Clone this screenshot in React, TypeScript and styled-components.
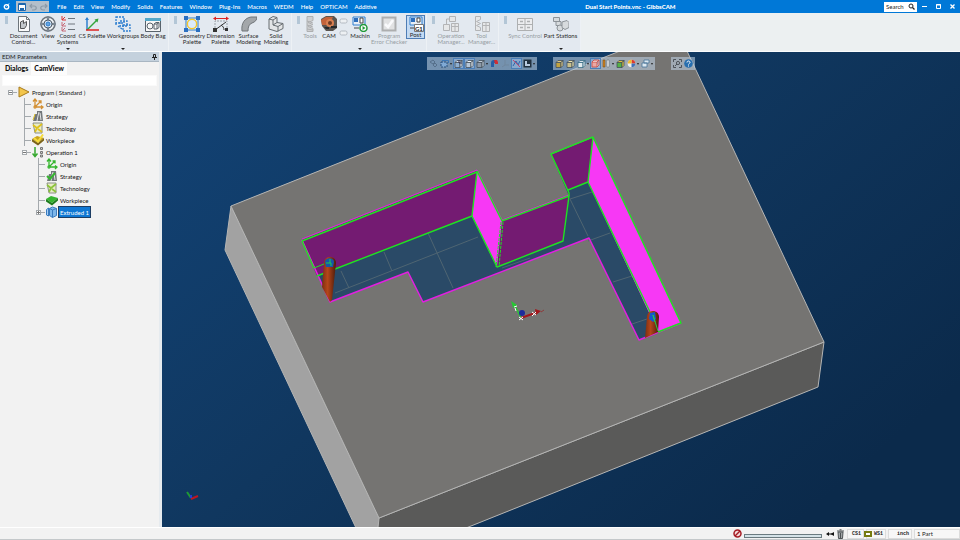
import React from "react";
import styled, { createGlobalStyle, css } from "styled-components";

const GlobalStyle = createGlobalStyle`
  *, *::before, *::after { box-sizing: border-box; }
  body { margin: 0; background: #f0f0f0; }
  button, input { font: inherit; color: inherit; margin: 0; padding: 0; border: 0; background: none; }
  button { cursor: pointer; }
  ul { list-style: none; margin: 0; padding: 0; }
  svg { display: block; flex: none; }
`;

const Shell = styled.div`
  display: flex;
  flex-direction: column;
  min-height: 100vh;
  font-family: Lato, "Open Sans", sans-serif;
  font-size: 6px;
  line-height: 7px;
  color: #1c1c1c;
  overflow: hidden;
`;

/* ---------- title bar ---------- */
const TitleBar = styled.header`
  display: flex;
  align-items: center;
  height: 13px;
  background: #0078d7;
  color: #fff;
`;
const AppMark = styled.span`
  display: flex;
  justify-content: center;
  width: 16px;
  padding-right: 3px;
`;
const QuickAccess = styled.div`
  display: flex;
  align-items: center;
  justify-content: space-around;
  width: 33px;
  height: 11px;
  background: #b3bfca;
`;
const Menu = styled.nav`
  display: flex;
  gap: 7px;
  padding-left: 8px;
`;
const MenuItem = styled.button`
  white-space: nowrap;
  font-weight: 500;
`;
const Title = styled.h1`
  flex: 1;
  margin: 0;
  text-align: center;
  font-size: 6px;
  line-height: 7px;
  font-weight: 900;
  white-space: nowrap;
`;
const SearchBox = styled.label`
  display: flex;
  align-items: center;
  width: 33px;
  height: 10px;
  padding: 0 2px;
  background: #fff;
  color: #222;
`;
const SearchInput = styled.input`
  flex: 1;
  width: 20px;
  min-width: 0;
  outline: 0;
  &::placeholder { color: #222; opacity: 1; }
`;
const WindowButtons = styled.div`
  display: flex;
  justify-content: space-around;
  width: 43px;
`;

/* ---------- ribbon ---------- */
const Ribbon = styled.div`
  display: flex;
  height: 39px;
  background: #ecf0f1;
  border-bottom: 1px solid #fafcfd;
`;
const Group = styled.div`
  display: flex;
  padding: 2px 1px 0 5px;
  background: #e3e9f0;
  border-right: 1px solid #edf1f5;
`;
const Grip = styled.span`
  width: 3px;
  height: 8px;
  margin: 1px 1px 0 0;
  background: #b3c6d6;
`;
const ToolButton = styled.button<{ $w: number; $off?: boolean; $on?: boolean }>`
  display: flex;
  flex-direction: column;
  align-items: center;
  width: ${(p) => p.$w}px;
  height: 35px;
  padding-top: 1px;
  white-space: nowrap;
  color: ${(p) => (p.$off ? "#979da3" : "#2b2b2b")};
  ${(p) => p.$off && css`svg { filter: grayscale(1); opacity: 0.8; }`}
  ${(p) =>
    p.$on &&
    css`
      height: 24px;
      padding-top: 0;
      background: #c3daf3;
      border: 1px solid #4e7db5;
    `}
`;
const ToolLabel = styled.span`
  display: flex;
  flex-direction: column;
  align-items: center;
  margin-top: 1px;
  line-height: 6px;
`;
const PressedLabel = styled(ToolLabel)`
  margin-top: 0;
`;
const Drop = styled.span`
  margin: auto 0 0;
  border: 2px solid transparent;
  border-top-color: #222;
  border-bottom: 0;
`;
const Minis = styled.div`
  display: flex;
  flex-direction: column;
  gap: 6px;
  width: 9px;
  padding-top: 3px;
`;

/* ---------- workspace ---------- */
const Work = styled.main`
  display: flex;
  flex: 1;
`;
const Side = styled.aside`
  display: flex;
  flex-direction: column;
  width: 162px;
  flex: none;
  border-right: 3px solid #e6ebef;
  background: #f2f2f2;
`;
const SideHead = styled.div`
  display: flex;
  align-items: center;
  justify-content: space-between;
  height: 10px;
  padding: 0 2px;
  background: #c4d1dd;
  border-bottom: 1px solid #a9b6c2;
`;
const Tabs = styled.div`
  display: flex;
  height: 13px;
  padding-left: 2px;
`;
const Tab = styled.button<{ $on?: boolean }>`
  padding: 1px 3px;
  font-size: 7px;
  line-height: 11px;
  font-weight: 900;
  color: #111;
  background: ${(p) => (p.$on ? "#fcfcfc" : "transparent")};
`;
const Filter = styled.input`
  height: 11px;
  margin: 0 2px;
  background: #fff;
  border: 1px solid #fafafa;
  outline: 0;
`;
const Tree = styled.ul`
  flex: 1;
  padding: 0 0 0 4px;
`;
const Row = styled.li`
  display: flex;
  align-items: center;
  height: 12px;
`;
const RowLabel = styled.button<{ $on?: boolean }>`
  height: 10px;
  padding: 0 1px;
  margin-left: 1px;
  white-space: nowrap;
  color: ${(p) => (p.$on ? "#fff" : "#111")};
  background: ${(p) => (p.$on ? "#0f78d4" : "transparent")};
  outline: ${(p) => (p.$on ? "1px solid #1c3d63" : "none")};
`;
const View = styled.section`
  position: relative;
  flex: 1;
  min-width: 0;
  background: #103a68;
  overflow: hidden;
`;
const Scene = styled.svg`
  width: 100%;
  height: 100%;
  max-height: calc(100vh - 65px);
`;
const Floating = styled.div`
  position: absolute;
  top: 5px;
  left: 0;
  right: 0;
  display: flex;
  justify-content: center;
  gap: 16px;
`;
const Bar = styled.div`
  display: flex;
  align-items: center;
  height: 13px;
  padding: 0 1px;
  background: rgba(190, 208, 226, 0.58);
`;
const BarButton = styled.button<{ $on?: boolean }>`
  display: flex;
  justify-content: center;
  align-items: center;
  width: 11px;
  height: 11px;
  background: ${(p) => (p.$on ? "rgba(150,185,225,.6)" : "transparent")};
  border: ${(p) => (p.$on ? "1px solid #4c7fb8" : "0")};
`;
const BarDrop = styled.span`
  margin-right: 1px;
  border: 1px solid transparent;
  border-top: 2px solid #222;
  border-bottom: 0;
`;

/* ---------- status bar ---------- */
const Status = styled.footer`
  display: flex;
  align-items: center;
  justify-content: flex-end;
  gap: 2px;
  height: 13px;
  background: #f2f2f2;
  border-top: 1px solid #fff;
  border-bottom: 1px solid #c4c8ca;
`;
const Track = styled.div`
  width: 78px;
  height: 4px;
  margin: 4px 2px 0 0;
  background: #d5e3e8;
  border: 1px solid #6b7b80;
`;
const Cell = styled.span<{ $w: number; $mono?: boolean }>`
  display: flex;
  align-items: center;
  justify-content: ${(p) => (p.$mono ? "flex-end" : "flex-start")};
  gap: 2px;
  width: ${(p) => p.$w}px;
  height: 10px;
  padding: 0 2px;
  border: 1px solid #dcdcdc;
  background: #f7f7f7;
  ${(p) => p.$mono && css`font: 700 5px/6px "Liberation Mono", monospace;`}
`;

/* ---------- ribbon icons, 16 x 16 ---------- */
const B = "#2f7fcf";
const G = "#6e757c";
const art: Record<string, React.ReactNode> = {
  doc: (
    <g fill="none" stroke={G}>
      <path d="M2.500 .5h8l3 3v12h-11z" fill="#fafafa" />
      <path d="M10.500.5v3h3" />
      <path d="M4.500 6l3-1.500v3l3-2v4l-2 3h-4z" fill="#c3c7ca" stroke="#555" />
    </g>
  ),
  view: (
    <g fill="none" stroke={G}>
      <circle cx="8" cy="8" r="7" strokeWidth="1.500" fill="#eef1f4" />
      <path d="M8 0v16M0 8h16" strokeWidth="2.500" stroke="#7d8893" />
      <circle cx="8" cy="8" r="4" fill="#dce9f6" stroke="#4f5d6b" />
      <circle cx="8" cy="8" r="2" fill="#69a6de" stroke={B} />
    </g>
  ),
  coord: (
    <g fill="none">
      {[0, 6, 11].map((y) => (
        <path key={y} d={`M2 ${y}v4h4M2 ${y + 4}l3-3`} stroke={y === 0 ? "#d33" : "#c66a78"} />
      ))}
      <path d="M8 2.500h7M8 8h7M8 13.500h7" stroke={G} />
    </g>
  ),
  cs: (
    <g fill="none" strokeWidth="1.500">
      <path d="M3 14V2" stroke={B} />
      <path d="M1 4l2-3 2 3z" fill={B} stroke="none" />
      <path d="M3 14L13 4" stroke="#34a53c" />
      <path d="M14.500 2.500l-4 1 3 3z" fill="#34a53c" stroke="none" />
      <path d="M2 14h13" stroke="#d22" />
    </g>
  ),
  work: (
    <g fill="none" stroke={B} strokeWidth="1.300" strokeDasharray="2 1">
      <path d="M1 1h8v6h-8zM5 5h7v5h-7zM8 9h7v6h-7z" />
      <path d="M1 7v2M3 10l4 3" />
    </g>
  ),
  bag: (
    <g fill="none" stroke="#59636c">
      <path d="M.5 2.500h15v13h-15z" fill="#f7f7f7" />
      <path d="M0 2h16v3H0z" fill="#53a7c8" stroke="none" />
      <circle cx="5" cy="10" r="3" />
      <path d="M9 8l2-1.500h3v5l-2 1.500h-3zM9 8h3v5M12 8l2-1.500" />
    </g>
  ),
  geo: (
    <g fill="none">
      <path d="M2 2h12v12H2z" fill="#dcebfa" stroke={B} />
      <circle cx="8" cy="8" r="4.700" stroke="#f4c62c" strokeWidth="1.500" />
      <path d="M0 0h4v4H0zM12 0h4v4h-4zM0 12h4v4H0zM12 12h4v4h-4z" fill="#2a6fc0" />
    </g>
  ),
  dim: (
    <g fill="none">
      <path d="M1 2.500h14" stroke="#d22" />
      <path d="M0 2.500l3-2v4zM16 2.500l-3-2v4z" fill="#d22" />
      <path d="M2 15V5h12v10" stroke="#9aa2a9" strokeDasharray="2 1" />
      <path d="M2 14L13 6M8 9c2 1 3 3 3 5" stroke="#333" />
      <path d="M0 12h4v4H0zM12 12h3v3h-3z" fill="#333" />
    </g>
  ),
  surf: (
    <path d="M1 15c-1-8 3-13 9-14h6c0 3-2 5-5 6-3 1-4 4-4 8z" fill="#a3a7aa" stroke="#707579" />
  ),
  solid: (
    <g fill="#e3e5e6" stroke="#666c71">
      <path d="M1 3l4-2.500 4 1v5l6 1v5l-6 3-8-2.500z" />
      <path d="M1 3l4 1v5l5 1.500v5M5 4l4-2.500M10 10.500l5-3M5 9l4-2.500" fill="none" />
    </g>
  ),
  tools: (
    <g fill="#c8ccd0" stroke="#9ca2a8">
      <path d="M5 .5h6v4l-5 2 5 2-5 2 5 2v3H5z" />
      <path d="M5 5l6 2M5 9l6 2M5 13l6 1" />
    </g>
  ),
  cam: (
    <g>
      <path d="M0 3l5-3h8l3 3v9l-4 3H5l-4-5z" fill="#59544f" />
      <path d="M0 4l5-3h7l-2 4-3 4H1z" fill="#c4633a" />
      <circle cx="9" cy="7" r="4" fill="#d98052" />
      <circle cx="9" cy="7" r="2" fill="#6b3a25" />
      <path d="M10 10h6v2h-6zM3 11h5v2H5z" fill="#26292c" />
    </g>
  ),
  machin: (
    <g>
      <path d="M1 1h12v8H1z" fill="#e8eef5" stroke={B} />
      <path d="M2 2h4v4H2z" fill="#2c6dbb" />
      <path d="M8 2h3v5H8z" fill="#fff" stroke="#444" />
      <path d="M2 12h5" stroke="#444" />
      <circle cx="11.500" cy="12" r="3.500" fill="#fff" stroke="#229a3a" strokeWidth="1.500" />
      <path d="M10.500 10l3 2-3 2z" fill="#229a3a" />
    </g>
  ),
  check: (
    <g fill="none">
      <path d="M1.500 1.500h13v13h-13z" fill="#dfe1e3" stroke="#9ba1a6" strokeWidth="2" />
      <path d="M4 8l3 3 5-7" stroke="#fff" strokeWidth="2.500" />
    </g>
  ),
  post: (
    <g>
      <path d="M2 1h12v8H2z" fill="#e8eef5" stroke={B} />
      <path d="M3 2h4v4H3z" fill="#2c6dbb" />
      <path d="M9 2h3v4H9z" fill="#fff" stroke="#444" />
      <path d="M2 12h4" stroke="#444" />
      <path d="M6.500 8.500h9v7h-9z" fill="#fff" stroke="#777" />
      <text x="7" y="14.500" fontSize="6" fontWeight="700" fill="#222">G1</text>
    </g>
  ),
  opman: (
    <g fill="#e4e7ea" stroke="#a3a9ae">
      <path d="M6.500.5h6v5h-6zM.5 8.500h6v6h-6zM8.500 7.500h7v8h-7zM8.500 10.500h7M12 7.500v8M3.500 8V3h3" />
    </g>
  ),
  toolman: (
    <g fill="#e4e7ea" stroke="#a3a9ae">
      <path d="M1.500.5h5v3l-4 2 4 2-4 2 4 2v3h-5zM8.500 6.500h7v9h-7zM8.500 9.500h7M12 6.500v9" />
    </g>
  ),
  sync: (
    <g fill="none" stroke="#9da3a9">
      <path d="M.5 2.500h15v12H.5zM8 2v12M.5 8.500h15" fill="#eceff1" />
      <path d="M3 5.500h3M10 5.500h3M3 11.500h3M10 11.500h3" strokeWidth="1.500" />
    </g>
  ),
  stations: (
    <g fill="#d7dbde" stroke="#8d9398">
      <path d="M.5 1.500h6v4h-6zM3 5.500h5v4H3z" />
      <circle cx="7" cy="12" r="3" />
      <path d="M9 6l5-1.500 2 2v5l-4 2-3-2z" />
    </g>
  ),
};

const Icon = ({ name }: { name: string }) => (
  <svg width="16" height="16" viewBox="0 0 16 16" aria-hidden>
    {art[name]}
  </svg>
);

type Tool = { i: string; t: string[]; w: number; off?: boolean; on?: boolean; drop?: boolean };
const groups: Tool[][] = [
  [
    { i: "doc", t: ["Document", "Control..."], w: 29 },
    { i: "view", t: ["View"], w: 20 },
    { i: "coord", t: ["Coord", "Systems"], w: 19, drop: true },
    { i: "cs", t: ["CS Palette"], w: 30 },
    { i: "work", t: ["Workgroups"], w: 32, drop: true },
    { i: "bag", t: ["Body Bag"], w: 28 },
  ],
  [
    { i: "geo", t: ["Geometry", "Palette"], w: 28 },
    { i: "dim", t: ["Dimension", "Palette"], w: 29 },
    { i: "surf", t: ["Surface", "Modeling"], w: 27 },
    { i: "solid", t: ["Solid", "Modeling"], w: 28 },
  ],
  [
    { i: "tools", t: ["Tools"], w: 18, off: true },
    { i: "cam", t: ["CAM"], w: 20 },
    { i: "machin", t: ["Machin"], w: 24, drop: true },
    { i: "check", t: ["Program", "Error Checker"], w: 34, off: true },
    { i: "post", t: ["Post"], w: 19, on: true },
  ],
  [
    { i: "opman", t: ["Operation", "Manager..."], w: 30, off: true },
    { i: "toolman", t: ["Tool", "Manager..."], w: 31, off: true },
  ],
  [
    { i: "sync", t: ["Sync Control"], w: 34, off: true },
    { i: "stations", t: ["Part Stations"], w: 37, drop: true },
  ],
];

/* ---------- tree ---------- */
type Guide = "blank" | "tee" | "minus" | "plus";
const GuideMark = ({ kind }: { kind: Guide }) => (
  <svg width="14" height="12" viewBox="0 0 14 12" shapeRendering="crispEdges" aria-hidden>
    {kind !== "blank" && (
      <g fill="none" stroke="#a4a9ad">
        <path d="M6.500 6.500H13" />
        {kind === "tee" && <path d="M6.500 0v12" />}
        {kind === "plus" && <path d="M6.500 0v6" />}
        {kind !== "tee" && <path d="M4.500 4.500h4v4h-4z" fill="#fff" />}
        {kind !== "tee" && <path d="M5 6.500h3" stroke="#777" />}
        {kind === "plus" && <path d="M6.500 5v3" stroke="#777" />}
      </g>
    )}
  </svg>
);

const TreeIcon = ({ name, tone }: { name: string; tone: string }) => (
  <svg width="12" height="12" viewBox="0 0 12 12" aria-hidden>
    {name === "program" && <path d="M1 1l10 5-10 5z" fill="#f3c64c" stroke="#a97c1c" />}
    {name === "origin" && (
      <g fill="none" stroke={tone} strokeWidth="1.300">
        <path d="M3 9V2M1 3.500L3 1l2 2.500M3 9l6-6M6.500 3H9v2.500M3 9h7M9 7.500l2 1.500-2 2" />
        <circle cx="3" cy="9" r="1" fill="#fff" />
      </g>
    )}
    {name === "strategy" && (
      <g>
        <path d="M1 11l2-7h2V1h5l1 10z" fill="#72777a" />
        <path d="M5 11l1-5 1-4M8 3l1 7" stroke="#e6e6e6" fill="none" />
        {tone === "#35b52f" ? (
          <path d="M1 6l3 3 5-6" stroke={tone} strokeWidth="2" fill="none" />
        ) : (
          <path d="M1 10l2-6" stroke={tone} fill="none" />
        )}
      </g>
    )}
    {name === "technology" && (
      <g>
        <path d="M1 1h9v10H3z" fill="#e9ecc8" stroke="#8a8f86" />
        <path d="M1 3l4 3-2 4M5 6l5-4M6 7l4 3" stroke={tone} strokeWidth="1.700" fill="none" />
      </g>
    )}
    {name === "workpiece" && (
      <g>
        <path d="M0 5l5-3 7 2-6 5z" fill={tone} />
        <path d="M0 5l6 4 6-5v2.500l-6 5-6-4z" fill={tone === "#35b52f" ? "#1d7c1c" : "#7b6318"} />
        {tone !== "#35b52f" && <path d="M2 4l4 3.500 5-7" stroke="#f6dc3a" strokeWidth="2" fill="none" />}
      </g>
    )}
    {name === "operation" && (
      <g fill="none">
        <path d="M3 1v9M.5 7.500L3 10.500l2.500-3" stroke="#35a82f" strokeWidth="1.500" />
        <path d="M8.500 1.500h2v2h-2zM8.500 5.500h2v2h-2zM8.500 9h2v2h-2z" stroke="#777" fill="#ccc" />
      </g>
    )}
    {name === "extruded" && (
      <g stroke="#3a7cc0">
        <path d="M.5 3.500l2-1.500v8l-2-1z" fill="#a9cff3" />
        <path d="M3.500 2.500l3-1.500 4 1.500v7l-4 2-3-2z" fill="#7db6ea" />
        <path d="M6.500 4v7.500M3.500 2.500l3 1.500 4-1.500" fill="none" />
      </g>
    )}
  </svg>
);

const rows: { g: Guide[]; icon: string; tone?: string; label: string; on?: boolean }[] = [
  { g: ["minus"], icon: "program", label: "Program ( Standard )" },
  { g: ["blank", "tee"], icon: "origin", tone: "#d39034", label: "Origin" },
  { g: ["blank", "tee"], icon: "strategy", tone: "#e2c52e", label: "Strategy" },
  { g: ["blank", "tee"], icon: "technology", tone: "#dfc21c", label: "Technology" },
  { g: ["blank", "tee"], icon: "workpiece", tone: "#c9a41c", label: "Workpiece" },
  { g: ["blank", "minus"], icon: "operation", label: "Operation 1" },
  { g: ["blank", "blank", "tee"], icon: "origin", tone: "#35b52f", label: "Origin" },
  { g: ["blank", "blank", "tee"], icon: "strategy", tone: "#35b52f", label: "Strategy" },
  { g: ["blank", "blank", "tee"], icon: "technology", tone: "#8cc43a", label: "Technology" },
  { g: ["blank", "blank", "tee"], icon: "workpiece", tone: "#35b52f", label: "Workpiece" },
  { g: ["blank", "blank", "plus"], icon: "extruded", label: "Extruded 1", on: true },
];

/* ---------- floating view bars ---------- */
const Cube = ({ face, top = "#dfe6ee", line = "#45505a" }: { face: string; top?: string; line?: string }) => (
  <g stroke={line} strokeWidth=".8">
    <path d="M1 3.500h5v5H1z" fill={face} />
    <path d="M1 3.500l2-2h5l-2 2zM6 8.500l2-2v-5l-2 2z" fill={top} />
  </g>
);
const marks: Record<string, React.ReactNode> = {
  "Select faces": <path d="M1 3l3-2 2 2-2 2zM4 6l2-2 2 2-2 2z" fill="none" stroke="#56708b" />,
  "Select box": (
    <g><path d="M1 3h6v5H1z" fill="#7fa9d4" stroke="#274d78" strokeDasharray="2 1" /><path d="M2 1.500h6.500V4" fill="none" stroke="#3b77b7" /></g>
  ),
  "Show solids": <g><Cube face="#8fb0d2" /><path d="M5 1v3h3" stroke="#335" fill="none" /></g>,
  "Show stock": <Cube face="#b7c7d8" top="#edf2f7" />,
  "Show part": <Cube face="#8c9aa8" top="#c0ccd8" />,
  "Render mode": (
    <g><path d="M1 8V4c0-2 1-3 3-3h2v3H4v4z" fill="#255fa7" /><path d="M4 1h3l1 2v2H5z" fill="#cf2f35" /></g>
  ),
  "Show axes": <path d="M4 1v5h4M4 6L1 8" fill="none" stroke="#70879e" />,
  "Show path": (
    <g><path d="M1 7l3-5 2 4 2-4" fill="none" stroke="#2f62a6" /><path d="M1 1l7 7" stroke="#bd4672" /></g>
  ),
  "Background": (
    <g><path d="M.5.5h8v8h-8z" fill="#21303f" /><path d="M2 2h2v3h3v2H2z" fill="#b9cbe0" /></g>
  ),
  "Shaded": <Cube face="#c2a340" top="#dcc988" />,
  "Shaded edges": <Cube face="#c9c08d" top="#ebe3ae" />,
  "Wireframe": <Cube face="#e1ebef" top="#d4e0e8" line="#3b6e86" />,
  "Section": (
    <g stroke="#c9473f" strokeWidth=".8"><path d="M1 3h5v5H1z" fill="#eba9a4" /><path d="M1 3l2-2h5L6 3M6 8l2-2V1" fill="#e9c3c0" /></g>
  ),
  "Split": (
    <g><path d="M1 1h2v7H1z" fill="#d28623" stroke="#68420f" strokeWidth=".5" /><path d="M5 1h2v7H5z" fill="#eef1f3" stroke="#5a6167" strokeWidth=".5" /></g>
  ),
  "Stock colour": <Cube face="#54b148" top="#dfc040" />,
  "Palette": (
    <g><circle cx="4.500" cy="4.500" r="3.800" fill="#f1f1ee" /><path d="M4.500 4.500V.7a3.800 3.800 0 0 1 3.800 3.800z" fill="#db3c31" /><path d="M4.500 4.500h3.800a3.800 3.800 0 0 1-3.800 3.800z" fill="#4172b9" /><path d="M4.500 4.500H.7a3.800 3.800 0 0 1 3.800-3.800z" fill="#eebc33" /></g>
  ),
  "Windows": <path d="M3 1h5v3H3zM1 4h5v4H1z" fill="#dde8f1" stroke="#46749b" strokeWidth=".8" />,
  "Fit view": (
    <g fill="none" stroke="#454b50" strokeWidth=".9"><path d="M.5 3V.5H3M6 .5h2.500V3M.5 6v2.500H3M6 8.500h2.500V6M2 7l2-2" /><circle cx="5" cy="4" r="1.600" /></g>
  ),
  "Help": (
    <g><circle cx="4.500" cy="4.500" r="4.300" fill="#286faf" /><path d="M3 3.500c0-2 3-2 3 0 0 1-1.500 1-1.500 2M4.500 6.500v1" fill="none" stroke="#fff" /></g>
  ),
};
const bars: { n: string; on?: boolean; drop?: boolean }[][] = [
  [
    { n: "Select faces" }, { n: "Select box", drop: true }, { n: "Show solids", on: true },
    { n: "Show stock", on: true }, { n: "Show part", drop: true }, { n: "Render mode" },
    { n: "Show axes" }, { n: "Show path", on: true }, { n: "Background", drop: true },
  ],
  [
    { n: "Shaded" }, { n: "Shaded edges" }, { n: "Wireframe", drop: true }, { n: "Section", on: true },
    { n: "Split", drop: true }, { n: "Stock colour" }, { n: "Palette", drop: true }, { n: "Windows", drop: true },
  ],
  [{ n: "Fit view" }, { n: "Help" }],
];

/* ---------- 3D scene ---------- */
const PartScene = () => (
  <Scene viewBox="162 52 798 475" preserveAspectRatio="xMidYMid slice" role="img" aria-label="Part model">
    <defs>
      <linearGradient id="sky" x1="0" y1="0" x2="1" y2="0.700">
        <stop offset="0" stopColor="#124376" />
        <stop offset="0.500" stopColor="#10375f" />
        <stop offset="1" stopColor="#0b2a4b" />
      </linearGradient>
      <linearGradient id="rod" x1="0" y1="0" x2="1" y2="0">
        <stop offset="0" stopColor="#7c2f10" />
        <stop offset="0.400" stopColor="#b5461a" />
        <stop offset="1" stopColor="#4d1c0b" />
      </linearGradient>
    </defs>
    <path d="M162 52h798v475H162z" fill="url(#sky)" />
    <g stroke="#b5b5b4" strokeWidth="1" strokeLinejoin="round">
      <path d="M231 206L225 250 356 528H378L379 518z" fill="#a2a2a2" />
      <path d="M379 518L824 342 818 387 466 528H378z" fill="#5a5a59" />
      <path d="M231 206L620 51H687L824 342 379 518z" fill="#757472" />
    </g>
    <path
      d="M302 240L477 171 502 221 569 196 551 154 593 137 681 323 639 340 589 238 423 302 408 272 330 302z"
      fill="#2a4a67"
    />
    <path
      d="M335 293L478 237M384 252L392 271M341 271L349 288M428 233L453 288M570 199L588 236M570 199L592 192M588 241L610 233M613 282L632 276M632 324L647 319M502 268L530 258"
      fill="none" stroke="#4f6572" strokeWidth="1"
    />
    <g fill="#741b72">
      <path d="M302 240L477 171 472 216 317 276z" />
      <path d="M502 221L569 196 563 241 497 267z" />
      <path d="M551 154L593 137 588 182 568 190z" />
    </g>
    <g fill="#f738f5">
      <path d="M477 171L502 221 497 267 472 216z" />
      <path d="M593 137L681 323 658 332 588 182z" />
    </g>
    <g fill="none" stroke="#e21fe0" strokeWidth="1.500" strokeLinejoin="round">
      <path d="M302 240L330 302 408 272 423 302 589 238 639 340 681 323" />
      <path d="M302 239L477 170 502 220 569 195M551 154L593 137" strokeWidth="1" />
    </g>
    <g fill="none" stroke="#1fe322" strokeWidth="1.400" strokeLinejoin="round">
      <path d="M302 241L477 172 472 216 317 276M302 241L314 268" />
      <path d="M477 171L502 221 569 196 563 241 497 267 472 216" />
      <path d="M569 196V193L551 154 593 137 588 182 568 190M593 137L681 323 658 332M588 182L650 312" />
      <path d="M501 222L496 267M503 222L499 267" strokeDasharray="3 1" strokeWidth="1" />
      <path d="M314 268L329 262" strokeWidth="1" />
    </g>
    <path d="M324 263c0-8 12-8 12 0L332 300 330 302 322 287z" fill="url(#rod)" />
    <path d="M325 262c0-5 9-5 9 0l-1 5h-7z" fill="#1557a8" />
    <path d="M326 263h5v3M330 259v4" stroke="#21cd4b" fill="none" />
    <path d="M647 317c0-8 12-8 12 0L658 332 645 338z" fill="url(#rod)" />
    <path d="M650 313l5-1 1 7-3 3-4-3z" fill="#1557c8" />
    <path d="M653 315l5 16M653 315l2 7" stroke="#21cd4b" fill="none" />
    <g fill="none">
      <path d="M521 318L514 304" stroke="#27c834" strokeWidth="1.500" />
      <path d="M511 301l6 4-4 3z" fill="#27c834" />
      <path d="M521 318L535 313" stroke="#a3161b" strokeWidth="2" />
      <path d="M541 311l-6-2 1 6z" fill="#a3161b" />
      <path d="M541 312l3-2" stroke="#8e3a3a" />
      <circle cx="522" cy="313" r="3" fill="#1d2b9c" />
      <path d="M519 317l4 3M519 320l4-3M532 312l4 3M532 316l4-4M514 307l3-1M515 308l1 3" stroke="#fff" />
      <path d="M191 498L187 492" stroke="#1f9a35" strokeWidth="2" />
      <path d="M191 499L198 496" stroke="#bd1620" strokeWidth="2" />
      <path d="M190 495h2v3h-2z" fill="#223fd0" />
    </g>
  </Scene>
);

const menus = ["File", "Edit", "View", "Modify", "Solids", "Features", "Window", "Plug-Ins", "Macros", "WEDM", "Help", "OPTICAM", "Additive"];

export default function App() {
  return (
    <Shell>
      <GlobalStyle />
      <TitleBar>
        <AppMark>
          <svg width="7" height="7" viewBox="0 0 7 7" aria-hidden>
            <circle cx="3.500" cy="3.800" r="2.200" fill="none" stroke="#fff" strokeWidth="1.400" />
            <path d="M3.500 3.500L6 .5" stroke="#fff" />
          </svg>
        </AppMark>
        <QuickAccess>
          <button aria-label="Save">
            <svg width="8" height="8" viewBox="0 0 8 8"><path d="M.5.5h7v7h-7z" fill="#fff" stroke="#1d67ae" /><path d="M2 5h4v3H2zM1 1h6v1H1z" fill="#1d67ae" /></svg>
          </button>
          <button aria-label="Undo">
            <svg width="8" height="8" viewBox="0 0 8 8"><path d="M3 1L1 3l2 2M1 3h4c3 0 3 4 0 4H3" fill="none" stroke="#8c9aa7" strokeWidth="1.200" /></svg>
          </button>
          <button aria-label="Redo">
            <svg width="8" height="8" viewBox="0 0 8 8"><path d="M5 1l2 2-2 2M7 3H3C0 3 0 7 3 7h2" fill="none" stroke="#8c9aa7" strokeWidth="1.200" /></svg>
          </button>
        </QuickAccess>
        <Menu>
          {menus.map((m) => <MenuItem key={m}>{m}</MenuItem>)}
        </Menu>
        <Title>Dual Start Points.vnc - GibbsCAM</Title>
        <SearchBox>
          <SearchInput placeholder="Search" aria-label="Search" />
          <svg width="7" height="7" viewBox="0 0 7 7" aria-hidden><circle cx="3" cy="3" r="2" fill="none" stroke="#222" /><path d="M4.500 4.500l2 2" stroke="#222" strokeWidth="1.300" /></svg>
        </SearchBox>
        <WindowButtons>
          <button aria-label="Minimize"><svg width="7" height="7" viewBox="0 0 7 7"><path d="M1 3.500h5" stroke="#fff" /></svg></button>
          <button aria-label="Restore"><svg width="7" height="7" viewBox="0 0 7 7"><path d="M1.500 1.500h4v4h-4zM1 2h5" fill="none" stroke="#fff" /></svg></button>
          <button aria-label="Close"><svg width="7" height="7" viewBox="0 0 7 7"><path d="M1.500 1.500l4 4M5.500 1.500l-4 4" stroke="#fff" strokeWidth="1.300" /></svg></button>
        </WindowButtons>
      </TitleBar>

      <Ribbon>
        {groups.map((g, n) => (
          <Group key={n}>
            <Grip />
            {g.map((t) => {
              const Label = t.on ? PressedLabel : ToolLabel;
              return (
                <React.Fragment key={t.i}>
                  <ToolButton $w={t.w} $off={t.off} $on={t.on} disabled={t.off}>
                    <Icon name={t.i} />
                    <Label>{t.t.map((line) => <span key={line}>{line}</span>)}</Label>
                    {t.drop && <Drop />}
                  </ToolButton>
                  {t.i === "cam" && (
                    <Minis>
                      {["Upper", "Lower"].map((k) => (
                        <button key={k} aria-label={k}>
                          <svg width="9" height="6" viewBox="0 0 9 6"><rect x="1" y="1" width="7" height="4" rx="1.500" fill="#edf0f3" stroke="#b4bbc2" /></svg>
                        </button>
                      ))}
                    </Minis>
                  )}
                </React.Fragment>
              );
            })}
          </Group>
        ))}
      </Ribbon>

      <Work>
        <Side>
          <SideHead>
            <span>EDM Parameters</span>
            <button aria-label="Pin">
              <svg width="5" height="6" viewBox="0 0 5 6"><path d="M1.500.5h2v3h-2zM0 3.500h5M2.500 4v2" fill="none" stroke="#222" /></svg>
            </button>
          </SideHead>
          <Tabs>
            <Tab>Dialogs</Tab>
            <Tab $on>CamView</Tab>
          </Tabs>
          <Filter aria-label="Filter" />
          <Tree>
            {rows.map((r, n) => (
              <Row key={n}>
                {r.g.map((k, i) => <GuideMark key={i} kind={k} />)}
                <TreeIcon name={r.icon} tone={r.tone ?? ""} />
                <RowLabel $on={r.on}>{r.label}</RowLabel>
              </Row>
            ))}
          </Tree>
        </Side>
        <View>
          <PartScene />
          <Floating>
            {bars.map((b, n) => (
              <Bar key={n}>
                {b.map((m) => (
                  <React.Fragment key={m.n}>
                    <BarButton $on={m.on} aria-label={m.n}>
                      <svg width="9" height="9" viewBox="0 0 9 9">{marks[m.n]}</svg>
                    </BarButton>
                    {m.drop && <BarDrop />}
                  </React.Fragment>
                ))}
              </Bar>
            ))}
          </Floating>
        </View>
      </Work>

      <Status>
        <svg width="9" height="9" viewBox="0 0 9 9" aria-hidden><circle cx="4.500" cy="4.500" r="3.500" fill="#f3dada" stroke="#a51c24" strokeWidth="1.500" /><path d="M2 7l5-5" stroke="#a51c24" strokeWidth="1.500" /></svg>
        <Track />
        <svg width="8" height="6" viewBox="0 0 8 6" aria-hidden><path d="M0 3l3-2v4zM8 1v4L4.500 3z" fill="#111" /><path d="M2 3h4" stroke="#111" /></svg>
        <svg width="9" height="10" viewBox="0 0 9 10" aria-hidden><path d="M1 2h7M3.500.8h2M2 3l.5 6.500h4L7 3z" fill="#a2a6a8" stroke="#4d5254" /><path d="M4.500 4v5" stroke="#4d5254" /></svg>
        <Cell $w={17} $mono>CS1</Cell>
        <Cell $w={20} $mono>
          <svg width="8" height="6" viewBox="0 0 8 6" aria-hidden><path d="M1 1h6v4H1z" fill="#fff" stroke="#767b10" strokeWidth="2" /></svg>
          WS1
        </Cell>
        <Cell $w={24} $mono>inch</Cell>
        <Cell $w={46}>1 Part</Cell>
      </Status>
    </Shell>
  );
}
